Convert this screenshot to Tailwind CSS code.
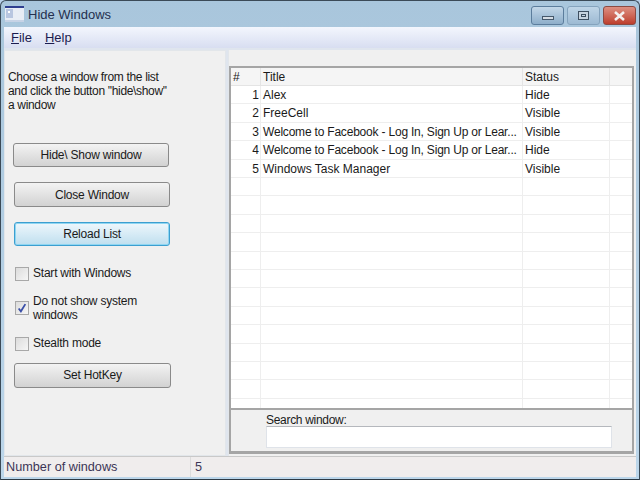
<!DOCTYPE html>
<html lang="en">
<head>
  <meta charset="UTF-8" />
  <title>Hide Windows</title>
  <script src="https://cdn.jsdelivr.net/npm/@tailwindcss/browser@4"></script>
</head>
<body class="m-0 overflow-hidden bg-[#b9d1ea]">
  <div class="w-[640px] h-[480px] flex flex-col overflow-hidden rounded-t-[6px] border-x border-t border-[#3b4a57] bg-gradient-to-b from-[#a9c6dc] to-[#bcd6ea] font-['Liberation_Sans',sans-serif] text-[12px] leading-[15px] text-[#1a1a1a]">
    <!-- title bar -->
    <div class="h-[26px] shrink-0 flex items-start pl-[4px] pr-[3px]">
      <svg class="mt-[5px] w-[19px] h-[16px]" viewBox="0 0 19 16">
        <rect x="0" y="0" width="19" height="16" fill="#e8edf5"/>
        <rect x="0" y="0" width="19" height="2" fill="#2f3f8f"/>
        <rect x="1" y="3" width="7" height="9" fill="#b8c6e0"/>
        <rect x="3" y="5" width="2" height="2" fill="#ffffff"/>
        <rect x="0" y="14" width="19" height="2" fill="#c7d3e6"/>
      </svg>
      <span class="ml-[4px] mt-[6px] text-[13px] text-[#24304f]">Hide Windows</span>
      <div class="ml-auto flex gap-[3px] mt-[5px]">
        <div class="w-[33px] h-[19px] rounded-[3px] border border-[#5c7d9c] bg-gradient-to-b from-[#c3d7e8] to-[#8eaeca] flex items-center justify-center">
          <div class="w-[12px] h-[4px] mt-[4px] border border-[#46586b] bg-[#d5dce4]"></div>
        </div>
        <div class="w-[33px] h-[19px] rounded-[3px] border border-[#85a3bd] bg-gradient-to-b from-[#bfd5e7] to-[#9dbad3] flex items-center justify-center">
          <div class="w-[11px] h-[9px] border border-[#3e4f60] bg-[#c6d3df] flex items-center justify-center"><div class="w-[5px] h-[3px] border border-[#3e4f60]"></div></div>
        </div>
        <div class="w-[33px] h-[19px] rounded-[3px] border border-[#8c4a42] bg-gradient-to-b from-[#dc8f82] to-[#bd3d2c] flex items-center justify-center">
          <svg class="w-[13px] h-[10px]" viewBox="0 0 13 10"><path d="M2 1 L11 9 M11 1 L2 9" stroke="#f4f0ef" stroke-width="2.6"/></svg>
        </div>
      </div>
    </div>

    <!-- menu -->
    <div class="h-[21px] shrink-0 mx-[3px] flex items-center gap-[13px] pl-[7px] text-[13px] text-[#1c1c50] bg-gradient-to-b from-[#f3f6fd] to-[#d8def1]">
      <span><u>F</u>ile</span>
      <span><u>H</u>elp</span>
    </div>

    <!-- content -->
    <div class="flex-1 min-h-0 mx-[3px] flex bg-[#dfe5ee] pt-[2px] gap-[2px]">
      <!-- left panel -->
      <div class="w-[222px] shrink-0 bg-[#f0f0f0] border border-[#e2e6ea] pl-[3px] pt-[19px] tracking-[-0.22px]">
        <p class="h-[45px] leading-[14px] tracking-[-0.33px]">Choose a window from the list<br />and click the button ''hide\show''<br />a window</p>
        <button class="block mt-[28px] ml-[5px] w-[156px] h-[24px] rounded-[3px] border border-[#8a8a8a] bg-gradient-to-b from-[#f3f3f3] to-[#d2d2d2]">Hide\ Show window</button>
        <button class="block mt-[15px] ml-[6px] w-[156px] h-[25px] rounded-[3px] border border-[#8a8a8a] bg-gradient-to-b from-[#f3f3f3] to-[#d2d2d2] pt-[1px]">Close Window</button>
        <button class="block mt-[15px] ml-[6px] w-[156px] h-[24px] rounded-[3px] border border-[#3c9fd0] bg-gradient-to-b from-[#eef7fc] to-[#bfdfef] shadow-[inset_0_0_0_1px_#8fd6f2]">Reload List</button>
        <label class="flex items-center mt-[20px] ml-[7px] h-[15px]">
          <span class="w-[14px] h-[14px] border border-[#a8a8a8] bg-gradient-to-br from-[#dcdcdc] to-[#f6f6f6]"></span>
          <span class="ml-[4px]">Start with Windows</span>
        </label>
        <label class="flex items-center mt-[13px] ml-[7px] h-[28px]">
          <span class="w-[14px] h-[14px] border border-[#a8a8a8] bg-gradient-to-br from-[#dcdcdc] to-[#f6f6f6] flex items-center justify-center">
            <svg class="w-[10px] h-[10px]" viewBox="0 0 9 9"><path d="M1.5 5 L3.5 7.5 L7.5 1" fill="none" stroke="#3a4fa8" stroke-width="1.6"/></svg>
          </span>
          <span class="ml-[4px] leading-[14px]">Do not show system<br />windows</span>
        </label>
        <label class="flex items-center mt-[14px] ml-[7px] h-[15px]">
          <span class="w-[14px] h-[14px] border border-[#a8a8a8] bg-gradient-to-br from-[#dcdcdc] to-[#f6f6f6]"></span>
          <span class="ml-[4px]">Stealth mode</span>
        </label>
        <button class="block mt-[12px] ml-[6px] w-[157px] h-[25px] rounded-[3px] border border-[#8a8a8a] bg-gradient-to-b from-[#f3f3f3] to-[#d2d2d2]">Set HotKey</button>
      </div>

      <!-- right panel -->
      <div class="flex-1 min-w-0 bg-[#f0f0f0] border-l border-[#e2e6ea] pt-[16px] flex flex-col">
        <div class="w-[405px] border-[2px] border-[#a5a5a5] border-b-0">
          <div class="h-[340px] overflow-hidden bg-white flex flex-col">
            <div class="h-[18px] shrink-0 grid grid-cols-[30px_262px_87px_1fr] bg-[#f5f5f5] border-b border-[#e4e4e4]">
              <div class="pl-[2px] border-r border-[#e4e4e4] leading-[19px]">#</div>
              <div class="pl-[2px] border-r border-[#e4e4e4] leading-[19px]">Title</div>
              <div class="pl-[2px] border-r border-[#e4e4e4] leading-[19px]">Status</div>
              <div></div>
            </div>
            <div class="flex-1 bg-[repeating-linear-gradient(to_bottom,#ffffff_0,#ffffff_17.4px,#eeeeee_17.4px,#eeeeee_18.4px)] grid grid-cols-[30px_262px_87px_1fr] auto-rows-[18.4px] relative">
              <div class="text-right pr-[2px] leading-[19px]">1</div><div class="pl-[2px] leading-[19px] whitespace-nowrap">Alex</div><div class="pl-[2px] leading-[19px]">Hide</div><div></div>
              <div class="text-right pr-[2px] leading-[19px]">2</div><div class="pl-[2px] leading-[19px] whitespace-nowrap">FreeCell</div><div class="pl-[2px] leading-[19px]">Visible</div><div></div>
              <div class="text-right pr-[2px] leading-[19px]">3</div><div class="pl-[2px] leading-[19px] whitespace-nowrap tracking-[-0.2px]">Welcome to Facebook - Log In, Sign Up or Lear...</div><div class="pl-[2px] leading-[19px]">Visible</div><div></div>
              <div class="text-right pr-[2px] leading-[19px]">4</div><div class="pl-[2px] leading-[19px] whitespace-nowrap tracking-[-0.2px]">Welcome to Facebook - Log In, Sign Up or Lear...</div><div class="pl-[2px] leading-[19px]">Hide</div><div></div>
              <div class="text-right pr-[2px] leading-[19px]">5</div><div class="pl-[2px] leading-[19px] whitespace-nowrap">Windows Task Manager</div><div class="pl-[2px] leading-[19px]">Visible</div><div></div>
              <div class="absolute inset-y-0 left-[29px] w-px bg-[#eeeeee]"></div>
              <div class="absolute inset-y-0 left-[291px] w-px bg-[#eeeeee]"></div>
              <div class="absolute inset-y-0 left-[378px] w-px bg-[#eeeeee]"></div>
            </div>
          </div>
        </div>
        <div class="w-[405px] flex-1 border-x-[2px] border-t-[2px] border-b-[3px] border-[#a5a5a5] pl-[35px] pt-[3px]">
          <div class="leading-[14px] tracking-[-0.3px]">Search window:</div>
          <div class="-mt-[1px] w-[346px] h-[22px] bg-white border border-[#dfe3e9] border-t-[#b5b8bd]"></div>
        </div>
        <div class="h-[2px]"></div>
      </div>
    </div>

    <!-- status bar -->
    <div class="h-[21px] shrink-0 mx-[3px] flex items-center border-t border-[#c9c9c9] bg-[#f0eded] text-[12.7px] text-[#3c3556]">
      <div class="w-[187px] pl-[2px] border-r border-[#dcdcdc] h-full flex items-center">Number of windows</div>
      <div class="pl-[4px]">5</div>
    </div>
    <div class="h-[3px] shrink-0 border-b border-[#2e3a44]"></div>
  </div>
</body>
</html>
